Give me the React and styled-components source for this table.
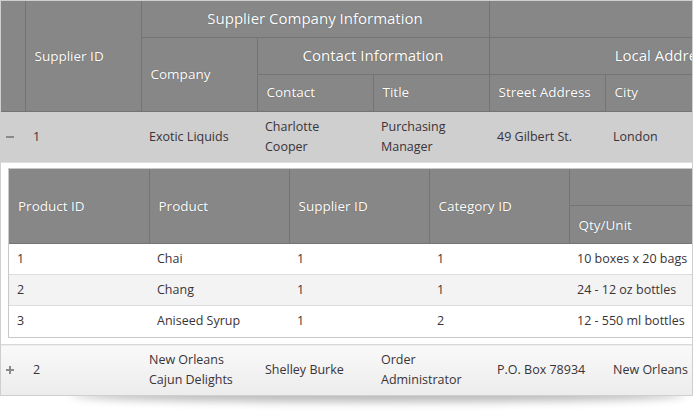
import React from "react";
import styled, { createGlobalStyle } from "styled-components";

const Global = createGlobalStyle`
  html, body { margin: 0; padding: 0; background: #fff; }
  body { font-family: "Open Sans", "Noto Sans", sans-serif; font-size: 12px; color: #333; }
`;

const Page = styled.div`
  position: relative;
  isolation: isolate;
  width: 693px;
  height: 415px;
  overflow: hidden;
  background: #fff;
`;

const Frame = styled.div`
  position: relative;
  width: 691px;
  border: 1px solid #cfcfcf;
  background: #fff;
  &::after {
    content: "";
    position: absolute;
    left: 70px;
    right: 6px;
    bottom: 2px;
    height: 14px;
    border-radius: 50%;
    box-shadow: 0 9px 9px rgba(0, 0, 0, 0.28);
    z-index: -1;
  }
`;

const Clip = styled.div`
  overflow: hidden;
  background: #fff;
`;

const Table = styled.table`
  table-layout: fixed;
  border-collapse: collapse;
  width: ${(p) => p.$width}px;
`;

const Th = styled.th`
  background: #878787;
  color: #fff;
  font-weight: normal;
  font-size: ${(p) => (p.$group ? "15px" : "13.5px")};
  line-height: 18px;
  text-align: ${(p) => (p.$group ? "center" : "left")};
  vertical-align: middle;
  height: ${(p) => p.$h || 36}px;
  padding: 0 9px ${(p) => (p.$lift ? 2 : 0)}px;
  border-right: 1px solid #747474;
  border-bottom: 1px solid #747474;
  text-shadow: 0 0 1px rgba(0, 0, 0, 0.4);
  white-space: nowrap;
  overflow: hidden;
  box-sizing: border-box;
`;

const HierTh = styled(Th)`
  padding: 0;
`;

const Row = styled.tr`
  background: ${(p) => p.$bg};
  border-bottom: 1px solid ${(p) => p.$line || "#dcdcdc"};
`;

const Td = styled.td`
  padding: 0 8px;
  height: ${(p) => p.$h || 30}px;
  line-height: 20px;
  vertical-align: middle;
  color: #3a3338;
  font-size: 12.5px;
  white-space: ${(p) => (p.$wrap ? "normal" : "nowrap")};
  overflow: hidden;
`;

const HierTd = styled.td`
  padding: 0 0 0 5px;
  vertical-align: middle;
`;

const Toggle = styled.span`
  display: block;
  position: relative;
  width: 8px;
  height: 8px;
  &::before {
    content: "";
    position: absolute;
    left: 0;
    top: 3px;
    width: 8px;
    height: 2px;
    background: #8a8a8a;
  }
  &::after {
    content: "";
    display: ${(p) => (p.$open ? "none" : "block")};
    position: absolute;
    left: 3px;
    top: 0;
    width: 2px;
    height: 8px;
    background: #8a8a8a;
  }
`;

const DetailCell = styled.td`
  padding: 5px 0 6px 7px;
  background: #fff;
`;

const Inner = styled.div`
  border: 1px solid #c9c9c9;
  border-right: none;
  overflow: hidden;
`;

const RowTwo = styled.tr`
  background: linear-gradient(#f9f9f9, #ececec);
  border-top: 1px solid #dadada;
`;

const mainCols = [24, ...Array(10).fill(116)];
const innerCols = Array(8).fill(140);

const products = [
  ["1", "Chai", "1", "1", "10 boxes x 20 bags", "18.00", "39", "0"],
  ["2", "Chang", "1", "1", "24 - 12 oz bottles", "19.00", "17", "40"],
  ["3", "Aniseed Syrup", "1", "2", "12 - 550 ml bottles", "10.00", "13", "70"],
];

function ProductTable() {
  return (
    <Inner>
      <Table $width={1120}>
        <colgroup>
          {innerCols.map((w, i) => (
            <col key={i} style={{ width: w }} />
          ))}
        </colgroup>
        <thead>
          <tr>
            <Th rowSpan={2}>Product ID</Th>
            <Th rowSpan={2}>Product</Th>
            <Th rowSpan={2}>Supplier ID</Th>
            <Th rowSpan={2}>Category ID</Th>
            <Th colSpan={4} $group $lift $h={37}>Unit Information</Th>
          </tr>
          <tr>
            <Th $h={38}>Qty/Unit</Th>
            <Th $h={38}>Unit Price</Th>
            <Th $h={38}>Units In Stock</Th>
            <Th $h={38}>Units On Order</Th>
          </tr>
        </thead>
        <tbody>
          {products.map((p, i) => (
            <Row key={i} $bg={i === 1 ? "#f3f3f3" : "#fff"} $line={i === 2 ? "transparent" : "#dcdcdc"}>
              {p.map((c, j) => (
                <Td key={j} $h={30}>{c}</Td>
              ))}
            </Row>
          ))}
        </tbody>
      </Table>
    </Inner>
  );
}

export default function App() {
  return (
    <Page>
      <Global />
      <Frame>
        <Clip>
          <Table $width={1184}>
            <colgroup>
              {mainCols.map((w, i) => (
                <col key={i} style={{ width: w }} />
              ))}
            </colgroup>
            <thead>
              <tr>
                <HierTh rowSpan={3} />
                <Th rowSpan={3}>Supplier ID</Th>
                <Th colSpan={3} $group $lift $h={36}>Supplier Company Information</Th>
                <Th colSpan={6} $group $lift $h={36}>Supplier Address Information</Th>
              </tr>
              <tr>
                <Th rowSpan={2}>Company</Th>
                <Th colSpan={2} $group $lift $h={37}>Contact Information</Th>
                <Th colSpan={3} $group $lift $h={37}>Local Address</Th>
                <Th colSpan={3} $group $lift $h={37}>Phone Information</Th>
              </tr>
              <tr>
                <Th $h={37} $lift>Contact</Th>
                <Th $h={37} $lift>Title</Th>
                <Th $h={37} $lift>Street Address</Th>
                <Th $h={37} $lift>City</Th>
                <Th $h={37} $lift>Region</Th>
                <Th $h={37} $lift>Postal Code</Th>
                <Th $h={37} $lift>Country</Th>
                <Th $h={37} $lift>Phone</Th>
              </tr>
            </thead>
            <tbody>
              <Row $bg="#cfcfcf" $line="#dedede">
                <HierTd>
                  <Toggle $open />
                </HierTd>
                <Td $h={50}>1</Td>
                <Td>Exotic Liquids</Td>
                <Td $wrap>Charlotte Cooper</Td>
                <Td $wrap>Purchasing Manager</Td>
                <Td>49 Gilbert St.</Td>
                <Td>London</Td>
                <Td></Td>
                <Td>EC1 4SD</Td>
                <Td>UK</Td>
                <Td>(171) 555-2222</Td>
              </Row>
              <tr>
                <DetailCell colSpan={11}>
                  <ProductTable />
                </DetailCell>
              </tr>
              <RowTwo>
                <HierTd>
                  <Toggle />
                </HierTd>
                <Td $h={50}>2</Td>
                <Td $wrap>New Orleans Cajun Delights</Td>
                <Td>Shelley Burke</Td>
                <Td $wrap>Order Administrator</Td>
                <Td>P.O. Box 78934</Td>
                <Td>New Orleans</Td>
                <Td>LA</Td>
                <Td>70117</Td>
                <Td>USA</Td>
                <Td>(100) 555-4822</Td>
              </RowTwo>
            </tbody>
          </Table>
        </Clip>
      </Frame>
    </Page>
  );
}
